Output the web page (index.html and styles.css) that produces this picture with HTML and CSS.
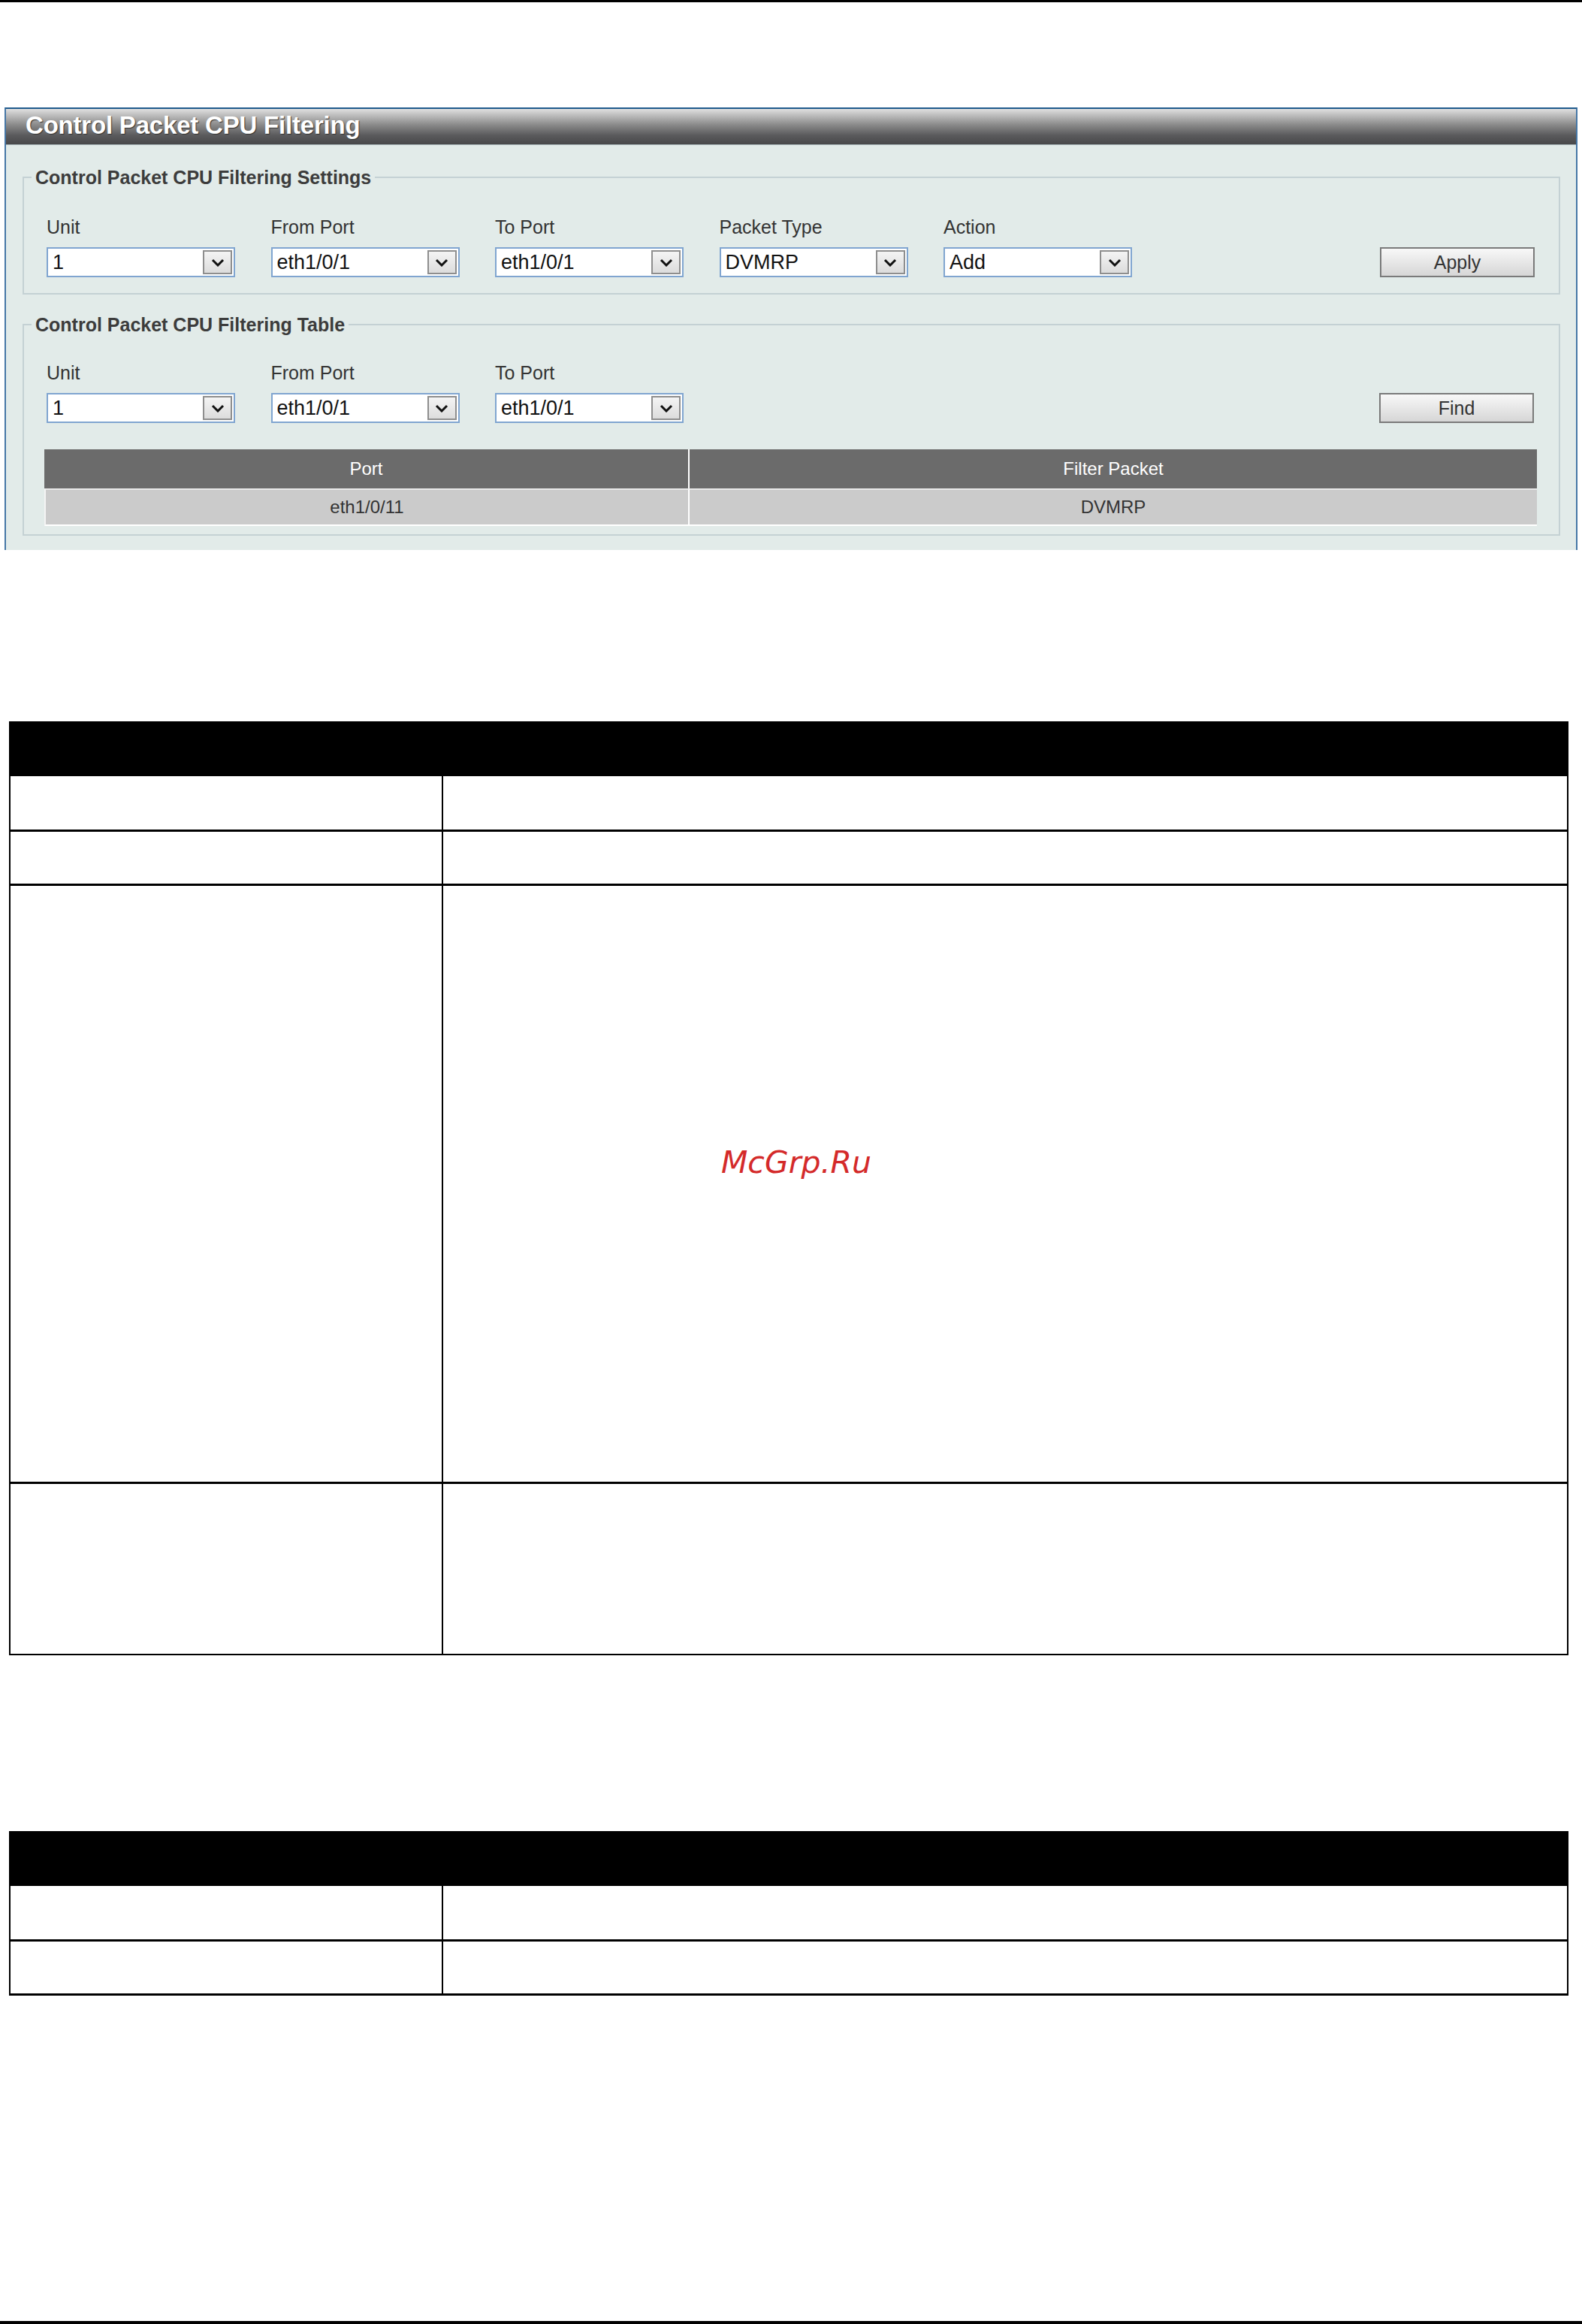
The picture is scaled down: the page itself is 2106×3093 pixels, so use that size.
FILE: index.html
```html
<!DOCTYPE html>
<html lang="en">
<head>
<meta charset="utf-8">
<title>Control Packet CPU Filtering</title>
<link rel="stylesheet" href="styles.css">
</head>
<body>
<div class="topline"></div>

<div class="panel">
  <div class="panel-title">Control Packet CPU Filtering</div>
  <div class="panel-body">
    <fieldset class="group group-settings">
      <legend>Control Packet CPU Filtering Settings</legend>
      <div class="inner">
        <div class="form-row">
          <div class="field">
            <div class="label">Unit</div>
            <div class="select"><span>1</span><span class="arrow"><svg viewBox="0 0 18 11" width="18" height="11"><polyline points="2,2 9,9 16,2" fill="none" stroke="#111" stroke-width="3"/></svg></span></div>
          </div>
          <div class="field">
            <div class="label">From Port</div>
            <div class="select"><span>eth1/0/1</span><span class="arrow"><svg viewBox="0 0 18 11" width="18" height="11"><polyline points="2,2 9,9 16,2" fill="none" stroke="#111" stroke-width="3"/></svg></span></div>
          </div>
          <div class="field">
            <div class="label">To Port</div>
            <div class="select"><span>eth1/0/1</span><span class="arrow"><svg viewBox="0 0 18 11" width="18" height="11"><polyline points="2,2 9,9 16,2" fill="none" stroke="#111" stroke-width="3"/></svg></span></div>
          </div>
          <div class="field">
            <div class="label">Packet Type</div>
            <div class="select"><span>DVMRP</span><span class="arrow"><svg viewBox="0 0 18 11" width="18" height="11"><polyline points="2,2 9,9 16,2" fill="none" stroke="#111" stroke-width="3"/></svg></span></div>
          </div>
          <div class="field">
            <div class="label">Action</div>
            <div class="select"><span>Add</span><span class="arrow"><svg viewBox="0 0 18 11" width="18" height="11"><polyline points="2,2 9,9 16,2" fill="none" stroke="#111" stroke-width="3"/></svg></span></div>
          </div>
          <button class="btn" type="button">Apply</button>
        </div>
      </div>
    </fieldset>

    <fieldset class="group group-table">
      <legend>Control Packet CPU Filtering Table</legend>
      <div class="inner">
        <div class="form-row">
          <div class="field">
            <div class="label">Unit</div>
            <div class="select"><span>1</span><span class="arrow"><svg viewBox="0 0 18 11" width="18" height="11"><polyline points="2,2 9,9 16,2" fill="none" stroke="#111" stroke-width="3"/></svg></span></div>
          </div>
          <div class="field">
            <div class="label">From Port</div>
            <div class="select"><span>eth1/0/1</span><span class="arrow"><svg viewBox="0 0 18 11" width="18" height="11"><polyline points="2,2 9,9 16,2" fill="none" stroke="#111" stroke-width="3"/></svg></span></div>
          </div>
          <div class="field">
            <div class="label">To Port</div>
            <div class="select"><span>eth1/0/1</span><span class="arrow"><svg viewBox="0 0 18 11" width="18" height="11"><polyline points="2,2 9,9 16,2" fill="none" stroke="#111" stroke-width="3"/></svg></span></div>
          </div>
          <button class="btn" type="button">Find</button>
        </div>
        <table class="grid">
          <colgroup><col class="col-port"><col></colgroup>
          <thead>
            <tr><th>Port</th><th>Filter Packet</th></tr>
          </thead>
          <tbody>
            <tr><td>eth1/0/11</td><td>DVMRP</td></tr>
          </tbody>
        </table>
      </div>
    </fieldset>
  </div>
</div>

<div class="doc doc-1">
  <div class="doc-head"></div>
  <div class="doc-row first r71"><div class="k"></div><div class="v"></div></div>
  <div class="doc-row r69"><div class="k"></div><div class="v"></div></div>
  <div class="doc-row r793"><div class="k"></div><div class="v"></div></div>
  <div class="doc-row r226 last"><div class="k"></div><div class="v"></div></div>
  <div class="watermark">McGrp.Ru</div>
</div>

<div class="doc doc-2">
  <div class="doc-head"></div>
  <div class="doc-row first r71"><div class="k"></div><div class="v"></div></div>
  <div class="doc-row r69 last thick"><div class="k"></div><div class="v"></div></div>
</div>

<div class="bottomline"></div>
</body>
</html>
```

FILE: styles.css
```css
html, body {
  margin: 0;
  padding: 0;
  background: #ffffff;
}

body {
  width: 2106px;
  font-family: "Liberation Sans", Arial, sans-serif;
}

.topline {
  height: 3px;
  background: #000;
}

.panel {
  margin: 140px 0 0 6px;
  width: 2094px;
  box-sizing: border-box;
  border-top: 2px solid #1f5a8c;
  border-left: 2px solid #4677a6;
  border-right: 2px solid #4677a6;
}

.panel-title {
  height: 48px;
  box-sizing: border-box;
  line-height: 44px;
  padding-left: 26px;
  font-size: 33px;
  font-weight: bold;
  letter-spacing: -0.2px;
  color: #ffffff;
  text-shadow: 1px 1px 1px #333;
  background: linear-gradient(#e0e0e0 0%, #bdbdbd 18%, #8a8a8a 45%, #5a5a5c 75%, #48484a 100%);
  border-bottom: 1px solid #9aa8aa;
}

.panel-body {
  background: #e2ebe9;
  padding: 28px 21px 19px 22px;
}

.group {
  margin: 0;
  padding: 0;
  border: 2px solid #c4d1d4;
  min-inline-size: 0;
}

.group legend {
  margin-left: 10px;
  padding: 0 5px;
  font-size: 25px;
  font-weight: bold;
  line-height: 30px;
  color: #3c3c3c;
}

.group-settings .inner {
  padding: 37px 32px 21px 30px;
}

.group-table {
  margin-top: 25px;
}

.group-table .inner {
  padding: 35px 29px 11px 27px;
}

.group-table .form-row {
  padding: 0 4px 0 3px;
}

.form-row {
  display: flex;
  align-items: flex-end;
  gap: 47.5px;
}

.field {
  width: 251px;
}

.label {
  height: 28px;
  line-height: 28px;
  margin-bottom: 13px;
  font-size: 25px;
  color: #333;
}

.select {
  box-sizing: border-box;
  width: 251px;
  height: 40px;
  border: 2px solid #80a5d0;
  background: #fff;
  display: flex;
  align-items: center;
  justify-content: space-between;
  padding: 0 2px 0 6px;
  font-size: 27px;
  color: #111;
}

.arrow {
  width: 39px;
  height: 32px;
  box-sizing: border-box;
  border: 2px solid #8e8e8e;
  background: linear-gradient(#f4f4f4, #dcdcdc);
  display: flex;
  align-items: center;
  justify-content: center;
}

.btn {
  margin-left: auto;
  box-sizing: border-box;
  width: 206px;
  height: 40px;
  padding: 0;
  border: 2px solid #7a7a7a;
  background: linear-gradient(#f8f8f8, #d6d6d6);
  font-family: "Liberation Sans", Arial, sans-serif;
  font-size: 25px;
  color: #333;
}

.grid {
  margin-top: 35px;
  width: 100%;
  table-layout: fixed;
  border-collapse: separate;
  border-spacing: 0;
  font-size: 24px;
}

.grid .col-port {
  width: 859px;
}

.grid th {
  height: 52px;
  box-sizing: border-box;
  padding: 0;
  background: #6b6b6b;
  color: #ffffff;
  font-weight: normal;
  text-align: center;
}

.grid td {
  height: 50px;
  box-sizing: border-box;
  padding: 0;
  background: #cbcbcb;
  color: #333;
  text-align: center;
  border-top: 2px solid #e8e8e8;
  border-bottom: 2px solid #ffffff;
}

.grid th:first-child,
.grid td:first-child {
  border-right: 2px solid #ffffff;
}

.grid td:first-child {
  border-left: 2px solid #f4f4f4;
}

.doc {
  position: relative;
  margin-left: 12px;
  width: 2076px;
}

.doc-1 {
  margin-top: 228px;
}

.doc-2 {
  margin-top: 234px;
}

.doc-head {
  height: 73px;
  background: #000;
}

.doc-row {
  display: grid;
  grid-template-columns: 576px 1fr;
  border-left: 2px solid #000;
  border-right: 2px solid #000;
  border-top: 3px solid #000;
}

.doc-row.first {
  border-top: 0;
}

.doc-row.last {
  border-bottom: 2px solid #000;
}

.doc-row.last.thick {
  border-bottom-width: 3px;
}

.doc-row .k {
  border-right: 2px solid #000;
}

.r71 { height: 71px; }
.r69 { height: 69px; }
.r793 { height: 793px; }
.r226 { height: 226px; }

.watermark {
  position: absolute;
  left: 948px;
  top: 567px;
  font-family: "DejaVu Sans", sans-serif;
  font-style: oblique;
  font-size: 41px;
  line-height: 1;
  color: #d42a2a;
}

.bottomline {
  margin-top: 433px;
  height: 4px;
  background: #000;
}
```
